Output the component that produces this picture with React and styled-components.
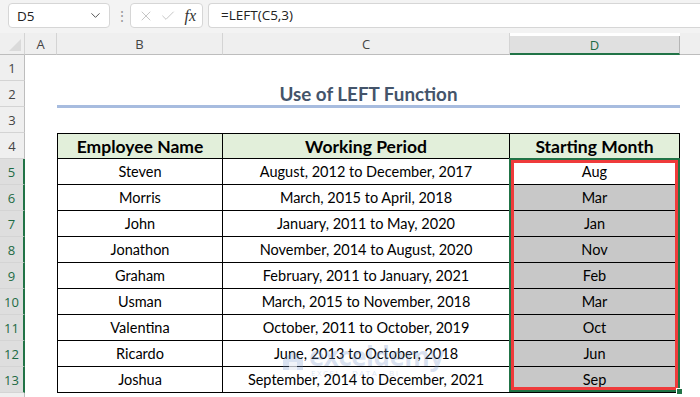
import React from 'react';
import styled, { createGlobalStyle } from 'styled-components';
import { ChevronDown, X, Check } from 'lucide-react';

const GlobalStyle = createGlobalStyle`
  html, body {
    margin: 0;
    padding: 0;
    background: #ffffff;
  }
`;

const employees = [
  { name: 'Steven', period: 'August, 2012 to December, 2017', month: 'Aug' },
  { name: 'Morris', period: 'March, 2015 to April, 2018', month: 'Mar' },
  { name: 'John', period: 'January, 2011 to May, 2020', month: 'Jan' },
  { name: 'Jonathon', period: 'November, 2014 to August, 2020', month: 'Nov' },
  { name: 'Graham', period: 'February, 2011 to January, 2021', month: 'Feb' },
  { name: 'Usman', period: 'March, 2015 to November, 2018', month: 'Mar' },
  { name: 'Valentina', period: 'October, 2011 to October, 2019', month: 'Oct' },
  { name: 'Ricardo', period: 'June, 2013 to October, 2018', month: 'Jun' },
  { name: 'Joshua', period: 'September, 2014 to December, 2021', month: 'Sep' },
];

// the E column only peeks in at the right edge, its letter is off-screen
const columns = [
  { key: 'A', label: 'A' },
  { key: 'B', label: 'B' },
  { key: 'C', label: 'C' },
  { key: 'D', label: 'D' },
  { key: 'E', label: '' },
];

const App = () => {
  const rowNumbers = Array.from({ length: 14 }, (_, i) => i + 1);

  return (
    <>
      <GlobalStyle />
      <Page>
        <TopBar>
          <NameBox>
            <span>D5</span>
            <ChevronDown size={15} strokeWidth={1.6} color="#555" />
          </NameBox>
          <Dots>⋮</Dots>
          <FxBox>
            <X size={16} strokeWidth={1.2} color="#b8b8b8" />
            <Check size={16} strokeWidth={1.2} color="#b8b8b8" />
            <FxText>fx</FxText>
          </FxBox>
          <FormulaBox>=LEFT(C5,3)</FormulaBox>
        </TopBar>

        <Sheet>
          <Corner>
            <CornerTriangle />
          </Corner>
          {columns.map((c, i) => (
            <ColHead key={c.key} $col={i + 2} $active={c.key === 'D'}>
              {c.label}
            </ColHead>
          ))}

          {rowNumbers.map((n) => (
            <RowHead key={n} $row={n + 1} $active={n >= 5 && n <= 13}>
              {n <= 13 ? n : ''}
            </RowHead>
          ))}

          <Title $row={3} $col="3 / 6">
            Use of LEFT Function
          </Title>

          <HeadCell $row={5} $col={3} $first>
            Employee Name
          </HeadCell>
          <HeadCell $row={5} $col={4}>
            Working Period
          </HeadCell>
          <HeadCell $row={5} $col={5}>
            Starting Month
          </HeadCell>

          {employees.map((e, i) => (
            <React.Fragment key={e.name}>
              <Cell $row={i + 6} $col={3} $first>
                {e.name}
              </Cell>
              <Cell $row={i + 6} $col={4}>
                {e.period}
              </Cell>
              <Cell $row={i + 6} $col={5} $shaded={i > 0}>
                {e.month}
              </Cell>
            </React.Fragment>
          ))}

          <Selection>
            <FillHandle />
          </Selection>

          <Watermark>
            <svg width="24" height="22" viewBox="0 0 24 22">
              <path d="M2 11 L12 2 L22 11 L22 21 L2 21 Z" fill="currentColor" />
              <path d="M8 13 h8 v8 h-8 Z" fill="#ffffff" opacity="0.6" />
            </svg>
            <WatermarkText>
              <WatermarkName>exceldemy</WatermarkName>
              <WatermarkTag>EXCEL · DATA · BI</WatermarkTag>
            </WatermarkText>
          </Watermark>
        </Sheet>
      </Page>
    </>
  );
};

export default App;

const Page = styled.div`
  width: 700px;
  height: 397px;
  overflow: hidden;
  background: #ffffff;
  font-family: Lato, 'Open Sans', sans-serif;
`;

const TopBar = styled.div`
  display: flex;
  align-items: flex-start;
  gap: 5px;
  height: 33px;
  padding: 3px 0 0 8px;
  box-sizing: border-box;
  background: #f3f3f3;
  font-family: 'Open Sans', 'Noto Sans', sans-serif;
  font-size: 13.5px;
  color: #222;
`;

const NameBox = styled.div`
  display: flex;
  align-items: center;
  justify-content: space-between;
  width: 102px;
  height: 25px;
  padding: 0 6px 0 8px;
  box-sizing: border-box;
  background: #ffffff;
  border: 1px solid #d6d6d6;
  border-radius: 4px;
`;

const Dots = styled.div`
  width: 10px;
  line-height: 25px;
  text-align: center;
  color: #9a9a9a;
  font-size: 14px;
`;

const FxBox = styled.div`
  display: flex;
  align-items: center;
  gap: 6px;
  width: 73px;
  height: 25px;
  padding: 0 6px 0 7px;
  box-sizing: border-box;
  background: #ffffff;
  border: 1px solid #d6d6d6;
  border-radius: 4px;
`;

const FxText = styled.span`
  margin-left: auto;
  font-family: 'Liberation Serif', serif;
  font-style: italic;
  font-size: 16px;
  color: #333;
`;

const FormulaBox = styled.div`
  flex: 1;
  height: 25px;
  line-height: 23px;
  padding-left: 12px;
  box-sizing: border-box;
  background: #ffffff;
  border: 1px solid #d6d6d6;
  border-right: none;
  border-radius: 4px 0 0 4px;
`;

const Sheet = styled.div`
  display: grid;
  grid-template-columns: 25px 32px 166px 287px 170px 64px;
  grid-template-rows: 22px repeat(14, 26px);
  background: #ffffff;
`;

const Corner = styled.div`
  grid-row: 1;
  grid-column: 1;
  position: relative;
  background: #efefef;
  border-bottom: 1px solid #bdbdbd;
  border-right: 1px solid #d4d4d4;
`;

const CornerTriangle = styled.div`
  position: absolute;
  right: 3px;
  bottom: 3px;
  width: 0;
  height: 0;
  border-left: 12px solid transparent;
  border-bottom: 12px solid #dadada;
`;

const ColHead = styled.div`
  grid-row: 1;
  grid-column: ${({ $col }) => $col};
  display: flex;
  align-items: center;
  justify-content: center;
  margin-top: ${({ $active }) => ($active ? '3px' : '0')};
  background: ${({ $active }) => ($active ? '#e0e0e0' : '#efefef')};
  border-right: 1px solid ${({ $active }) => ($active ? '#b5b5b5' : '#d4d4d4')};
  border-bottom: ${({ $active }) => ($active ? '2px solid #217346' : '1px solid #bdbdbd')};
  font-family: 'Open Sans', 'Noto Sans', sans-serif;
  font-size: 13px;
  color: ${({ $active }) => ($active ? '#1d6b44' : '#444')};
  box-sizing: border-box;
`;

const RowHead = styled.div`
  grid-row: ${({ $row }) => $row};
  grid-column: 1;
  display: flex;
  align-items: center;
  justify-content: center;
  background: ${({ $active }) => ($active ? '#dedede' : '#efefef')};
  border-bottom: 1px solid #d4d4d4;
  border-right: ${({ $active }) => ($active ? '2px solid #217346' : '1px solid #bdbdbd')};
  font-family: 'Open Sans', 'Noto Sans', sans-serif;
  font-size: 13px;
  color: ${({ $active }) => ($active ? '#1d6b44' : '#444')};
  box-sizing: border-box;
`;

const Title = styled.div`
  grid-row: ${({ $row }) => $row};
  grid-column: ${({ $col }) => $col};
  display: flex;
  align-items: center;
  justify-content: center;
  border-bottom: 3px solid #a7bcdf;
  margin-bottom: -1px;
  font-weight: 700;
  font-size: 18.8px;
  color: #44546a;
`;

const Cell = styled.div`
  grid-row: ${({ $row }) => $row};
  grid-column: ${({ $col }) => $col};
  display: flex;
  align-items: center;
  justify-content: center;
  background: ${({ $shaded }) => ($shaded ? '#c8c8c8' : '#ffffff')};
  border-right: 1px solid #000;
  border-bottom: 1px solid #000;
  border-left: ${({ $first }) => ($first ? '1px solid #000' : 'none')};
  font-size: 14.5px;
  color: #000;
  white-space: nowrap;
  box-sizing: border-box;
`;

const HeadCell = styled(Cell)`
  background: #e2efda;
  border-top: 1px solid #000;
  font-weight: 700;
  font-size: 17.5px;
`;

const Selection = styled.div`
  grid-row: 6 / 15;
  grid-column: 5;
  position: relative;
  z-index: 2;
  margin: -1px 0 1px -1px;
  border: 2px solid #217346;
  box-shadow: inset 0 0 0 3px #ef3b3b;
  pointer-events: none;
`;

const FillHandle = styled.div`
  position: absolute;
  right: -5px;
  bottom: -5px;
  width: 5px;
  height: 5px;
  background: #217346;
  border: 1px solid #ffffff;
`;

const Watermark = styled.div`
  grid-row: 13 / 15;
  grid-column: 4;
  z-index: 1;
  display: flex;
  align-items: center;
  gap: 4px;
  padding: 0 0 14px 58px;
  color: rgba(120, 150, 205, 0.28);
  pointer-events: none;
`;

const WatermarkText = styled.div`
  display: flex;
  flex-direction: column;
  line-height: 1;
`;

const WatermarkName = styled.span`
  font-family: 'Open Sans', sans-serif;
  font-weight: 700;
  font-size: 26px;
  letter-spacing: -0.5px;
`;

const WatermarkTag = styled.span`
  font-family: 'Open Sans', sans-serif;
  font-size: 8px;
  letter-spacing: 1.5px;
  margin-left: 2px;
`;
